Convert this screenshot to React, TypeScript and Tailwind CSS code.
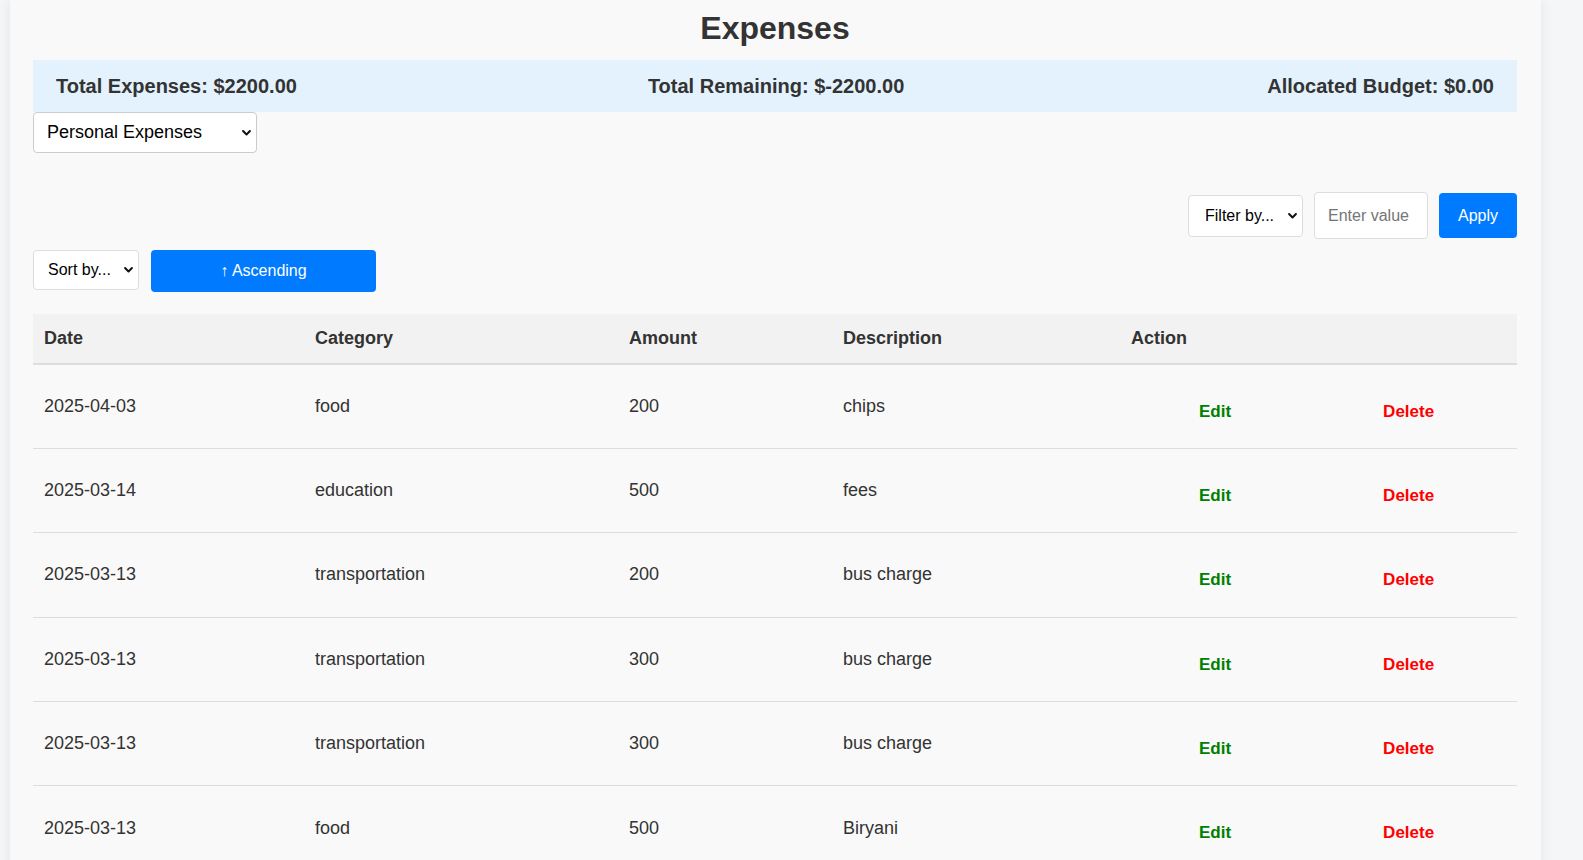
import React, { useState } from "react";

interface Expense {
  date: string;
  category: string;
  amount: number;
  description: string;
}

const expenses: Expense[] = [
  { date: "2025-04-03", category: "food", amount: 200, description: "chips" },
  { date: "2025-03-14", category: "education", amount: 500, description: "fees" },
  { date: "2025-03-13", category: "transportation", amount: 200, description: "bus charge" },
  { date: "2025-03-13", category: "transportation", amount: 300, description: "bus charge" },
  { date: "2025-03-13", category: "transportation", amount: 300, description: "bus charge" },
  { date: "2025-03-13", category: "food", amount: 500, description: "Biryani" },
];

const totalExpenses = 2200;
const budget = 0;

const Chevron = () => (
  <svg className="pointer-events-none absolute right-[6px] top-1/2 h-[8px] w-[9px] -translate-y-1/2" viewBox="0 0 10 7" fill="none">
    <path d="M1.2 1.3 5 5.2l3.8-3.9" stroke="#111" strokeWidth="2.2" strokeLinecap="round" strokeLinejoin="round" />
  </svg>
);

const App = () => {
  const [asc, setAsc] = useState(true);

  return (
    <div className="min-h-screen bg-[#f5f6f8] font-['Liberation_Sans',Arial,sans-serif] text-[#333]">
      <div className="ml-[10px] w-[1531px] bg-[#f9f9f9] pb-10 pl-[23px] pr-[24px] shadow-[0_0_12px_rgba(0,0,0,0.08)]">
        <h1 className="h-[60px] pt-[10px] text-center text-[32px] leading-[37px] font-bold text-[#333]">Expenses</h1>

        {/* summary banner */}
        <div className="flex h-[52px] items-center justify-between bg-[#e3f2fd] px-[23px] text-[20px] font-bold text-[#333]">
          <span>Total Expenses: ${totalExpenses.toFixed(2)}</span>
          <span className="mr-[12px]">Total Remaining: ${(budget - totalExpenses).toFixed(2)}</span>
          <span>Allocated Budget: ${budget.toFixed(2)}</span>
        </div>

        <div className="relative w-[224px]">
          <select className="h-[41px] w-full appearance-none rounded-[4px] border border-[#ccc] bg-white pl-[13px] text-[18px] text-black outline-none">
            <option>Personal Expenses</option>
            <option>Family Expenses</option>
          </select>
          <Chevron />
        </div>

        {/* filter */}
        <div className="mt-[39px] flex items-center justify-end gap-[11px]">
          <div className="relative w-[115px]">
            <select className="h-[42px] w-full appearance-none rounded-[4px] border border-[#ddd] bg-white pl-[16px] text-[16px] text-black outline-none">
              <option>Filter by...</option>
              <option>Category</option>
              <option>Date</option>
            </select>
            <Chevron />
          </div>
          <input
            placeholder="Enter value"
            className="h-[47px] w-[114px] rounded-[4px] border border-[#ddd] bg-white px-[13px] text-[16px] text-black outline-none placeholder:text-[#757575]"
          />
          <button className="h-[45px] w-[78px] rounded-[4px] bg-[#007bff] text-[16px] text-white">Apply</button>
        </div>

        {/* sort */}
        <div className="mt-[11px] flex items-start gap-[12px]">
          <div className="relative w-[106px]">
            <select className="h-[40px] w-full appearance-none rounded-[4px] border border-[#ddd] bg-white pl-[14px] text-[16px] text-black outline-none">
              <option>Sort by...</option>
              <option>Date</option>
              <option>Amount</option>
            </select>
            <Chevron />
          </div>
          <button
            onClick={() => setAsc(!asc)}
            className="h-[42px] w-[225px] rounded-[4px] bg-[#007bff] text-[16px] text-white"
          >
            {asc ? "↑ Ascending" : "↓ Descending"}
          </button>
        </div>

        <table className="mt-[22px] w-full table-fixed border-collapse">
          <colgroup>
            <col className="w-[271px]" />
            <col className="w-[314px]" />
            <col className="w-[214px]" />
            <col className="w-[288px]" />
            <col className="w-[397px]" />
          </colgroup>
          <thead>
            <tr className="h-[50px] border-b-2 border-[#ddd] bg-[#f2f2f2] text-left text-[18px] font-bold">
              <th className="px-[11px]">Date</th>
              <th className="px-[11px]">Category</th>
              <th className="px-[11px]">Amount</th>
              <th className="px-[11px]">Description</th>
              <th className="px-[11px]">Action</th>
            </tr>
          </thead>
          <tbody>
            {expenses.map((e, i) => (
              <tr key={i} className="h-[84.4px] border-b border-[#ddd] text-[18px]">
                <td className="px-[11px]">{e.date}</td>
                <td className="px-[11px]">{e.category}</td>
                <td className="px-[11px]">{e.amount}</td>
                <td className="px-[11px]">{e.description}</td>
                <td className="pl-[79px]">
                  <div className="flex gap-[152px] pt-[10px] text-[17px] font-bold">
                    <button className="text-[#008000]">Edit</button>
                    <button className="text-[#ff0000]">Delete</button>
                  </div>
                </td>
              </tr>
            ))}
          </tbody>
        </table>
      </div>
    </div>
  );
};

export default App;
